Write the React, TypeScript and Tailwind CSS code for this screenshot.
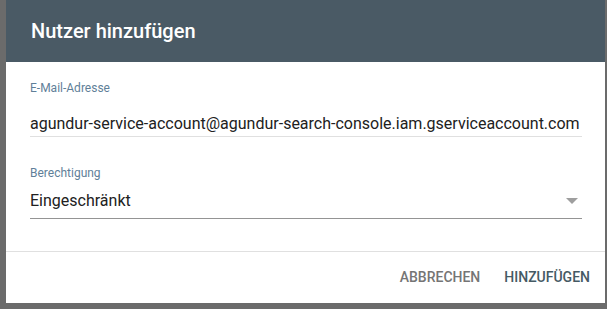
export default function App() {
  return (
    <div
      className="w-[607px] h-[309px] bg-[#6b6b6b] flex pl-[6px] pr-[2px] pb-[6px]"
      style={{ fontFamily: "Roboto, 'Liberation Sans', sans-serif" }}
    >
      <div className="flex-1 min-w-0 bg-white flex flex-col">
        {/* Header */}
        <div className="h-[62px] shrink-0 bg-[#4a5a65] px-[25px] flex items-center">
          <h1 className="text-white text-[20px] font-medium leading-none">Nutzer hinzufügen</h1>
        </div>

        {/* Body */}
        <div className="pl-[24px] pr-[23px] pt-[18px] pb-[32px] flex flex-col">
          <label className="text-[12px] leading-[16px] text-[#5f7f99]">E-Mail-Adresse</label>
          <div className="mt-[16px] border-b border-[#e0e0e0] text-[16px] leading-[24px] text-[#212121] whitespace-nowrap">
            agundur-service-account@agundur-search-console.iam.gserviceaccount.com
          </div>

          <label className="mt-[28px] text-[12px] leading-[16px] text-[#5f7f99]">Berechtigung</label>
          <div className="mt-[8px] border-b border-[#949494] pb-[5px] flex items-center justify-between text-[16px] leading-[24px] text-[#212121]">
            <span>Eingeschränkt</span>
            <svg width="12" height="6" viewBox="0 0 12 6" className="mr-[4px]">
              <path d="M0 0h12L6 6z" fill="#9e9e9e" />
            </svg>
          </div>
        </div>

        <div className="border-t border-[#e0e0e0]" />

        {/* Footer */}
        <div className="flex-1 flex items-center justify-end gap-[24px] pr-[15px]">
          <button className="text-[14px] font-medium uppercase text-[#757575]">Abbrechen</button>
          <button className="text-[14px] font-medium uppercase text-[#455a64]">Hinzufügen</button>
        </div>
      </div>
    </div>
  );
}
